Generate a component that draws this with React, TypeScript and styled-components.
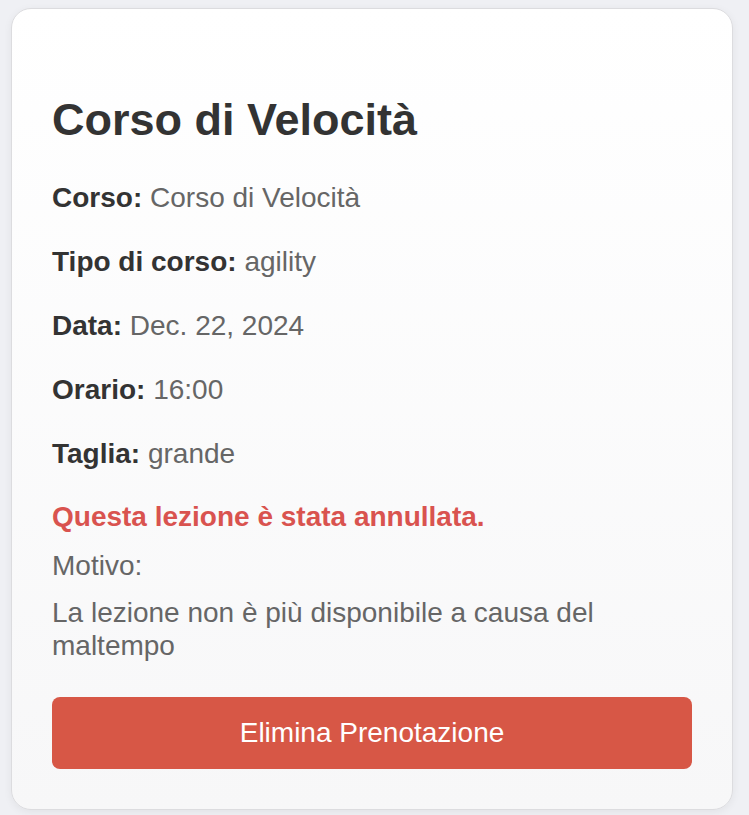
import styled, { createGlobalStyle } from "styled-components";

const GlobalStyle = createGlobalStyle`
  html, body {
    margin: 0;
    padding: 0;
    background: #eff0f4;
  }
  * {
    box-sizing: border-box;
  }
`;

const details = [
  { label: "Corso:", value: "Corso di Velocità" },
  { label: "Tipo di corso:", value: "agility" },
  { label: "Data:", value: "Dec. 22, 2024" },
  { label: "Orario:", value: "16:00" },
  { label: "Taglia:", value: "grande" },
];

export default function App() {
  return (
    <>
      <GlobalStyle />
      <Page>
        <Card>
          <Title>Corso di Velocità</Title>
          <DetailList>
            {details.map((d) => (
              <DetailRow key={d.label}>
                <Label>{d.label}</Label> {d.value}
              </DetailRow>
            ))}
          </DetailList>
          <Cancelled>Questa lezione è stata annullata.</Cancelled>
          <ReasonLabel>Motivo:</ReasonLabel>
          <ReasonText>
            La lezione non è più disponibile a causa del maltempo
          </ReasonText>
          <DeleteButton>Elimina Prenotazione</DeleteButton>
        </Card>
      </Page>
    </>
  );
}

const Page = styled.div`
  padding: 8px 16px 6px 11px;
  font-family: "Liberation Sans", Arial, Helvetica, sans-serif;
`;

const Card = styled.div`
  display: flex;
  flex-direction: column;
  width: 722px;
  padding: 40px;
  border: 1px solid #dcdcdf;
  border-radius: 20px;
  background: linear-gradient(180deg, #ffffff 0%, #f7f7f8 100%);
  box-shadow: 0 2px 8px rgba(0, 0, 0, 0.06);
`;

const Title = styled.h1`
  margin: 46px 0 37px;
  font-size: 45px;
  line-height: 50px;
  font-weight: 700;
  color: #333333;
`;

const DetailList = styled.div`
  display: flex;
  flex-direction: column;
  gap: 32px;
  margin-bottom: 31px;
`;

const DetailRow = styled.p`
  margin: 0;
  font-size: 28px;
  line-height: 32px;
  color: #666666;
`;

const Label = styled.strong`
  font-weight: 700;
  color: #333333;
`;

const Cancelled = styled.p`
  margin: 0 0 16px;
  font-size: 28px;
  line-height: 32px;
  font-weight: 700;
  color: #d9534f;
`;

const ReasonLabel = styled.p`
  margin: 0 0 14px;
  font-size: 28px;
  line-height: 33px;
  color: #666666;
`;

const ReasonText = styled.p`
  margin: 0 0 35px;
  font-size: 28px;
  line-height: 33px;
  color: #666666;
`;

const DeleteButton = styled.button`
  height: 72px;
  width: 100%;
  border: none;
  border-radius: 8px;
  background: #d75746;
  color: #ffffff;
  font-family: "Liberation Sans", Arial, Helvetica, sans-serif;
  font-size: 28px;
  cursor: pointer;
`;
